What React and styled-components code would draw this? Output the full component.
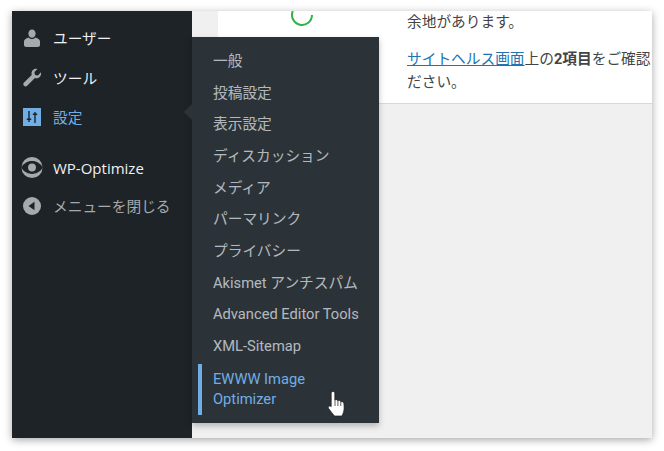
import React from 'react'
import styled, { createGlobalStyle } from 'styled-components'

const Global = createGlobalStyle`
  html, body { margin: 0; padding: 0; background: #fff; }
  body { width: 664px; height: 451px; overflow: hidden; font-family: Roboto, "Noto Sans CJK JP", sans-serif; }
`

const Page = styled.div`
  width: 664px;
  height: 451px;
  box-sizing: border-box;
  padding: 11px 12px 13px;
`

const Frame = styled.div`
  position: relative;
  display: flex;
  height: 427px;
  background: #f0f0f1;
  box-shadow: 0 2px 8px rgba(0, 0, 0, 0.35);
  overflow: hidden;
`

const Sidebar = styled.nav`
  width: 180px;
  flex: none;
  background: #1d2327;
  padding-top: 7px;
  box-sizing: border-box;
`

const MenuRow = styled.div`
  display: flex;
  align-items: center;
  height: 39.5px;
  margin-top: ${p => p.$gap || 0}px;
  padding-left: 9px;
  gap: 10px;
  font-size: ${p => p.$latin ? 15 : 14.7}px;
  font-family: ${p => p.$latin ? '"Open Sans", sans-serif' : 'inherit'};
  font-weight: ${p => p.$latin ? 500 : 400};
  color: ${p => p.$color || '#f0f0f1'};
`

const IconBox = styled.span`
  display: flex;
  width: 22px;
  height: 22px;
  align-items: center;
  justify-content: center;
  flex: none;
`

const Main = styled.div`
  flex: 1;
  padding-left: 26px;
`

const Card = styled.section`
  display: flex;
  height: 92px;
  background: #fff;
  border-bottom: 1px solid #d8d8d8;
`

const RingCell = styled.div`
  width: 189px;
  flex: none;
  padding-left: 72px;
  box-sizing: border-box;
`

const Notice = styled.div`
  font-size: 14.7px;
  line-height: 23px;
  color: #444;
  white-space: nowrap;
  overflow: hidden;
  flex: 1;
`

const Para = styled.p`
  margin: 0 0 14px;
`

const Link = styled.a`
  color: #2271b1;
  text-decoration: underline;
`

const Flyout = styled.ul`
  position: absolute;
  left: 180px;
  top: 26px;
  width: 187px;
  height: 386px;
  box-sizing: border-box;
  margin: 0;
  padding: 8px 0 0;
  list-style: none;
  background: #2c3338;
  box-shadow: 0 3px 6px rgba(0, 0, 0, 0.25);
  &::before {
    content: "";
    position: absolute;
    left: -8px;
    top: 67px;
    border: 8px solid transparent;
    border-left: 0;
    border-right-color: #2c3338;
  }
`

const SubItem = styled.li`
  padding-left: ${p => p.$active ? 11 : 21}px;
  margin-left: ${p => p.$active ? 6 : 0}px;
  margin-top: ${p => p.$active ? 2 : 0}px;
  min-height: ${p => p.$active ? 51 : 31.7}px;
  display: flex;
  align-items: center;
  font-size: 14.7px;
  line-height: 20px;
  color: ${p => p.$active ? '#72aee6' : 'rgba(240, 246, 252, 0.7)'};
  border-left: ${p => p.$active ? '4px solid #72aee6' : '0'};
  white-space: pre-line;
`

const Cursor = styled.svg`
  position: absolute;
  left: 315px;
  top: 379px;
`

const items = ['一般', '投稿設定', '表示設定', 'ディスカッション', 'メディア', 'パーマリンク', 'プライバシー', 'Akismet アンチスパム', 'Advanced Editor Tools', 'XML-Sitemap']

export default function App() {
  return (
    <Page>
      <Global />
      <Frame>
        <Sidebar>
          <MenuRow>
            <IconBox>
              <svg width="20" height="20" viewBox="0 0 20 20" fill="#a7aaad">
                <path d="M10 1.500c2.200 0 3.600 1.700 3.600 4s-1.500 4.300-3.600 4.300S6.400 7.800 6.400 5.500 7.800 1.500 10 1.500z" />
                <path d="M6.800 9.500c.9 1 2 1.600 3.200 1.600s2.300-.6 3.200-1.600c2 .4 4.300 1.500 4.800 3.500v4c0 1-1 2-2.500 2h-11C3 19 2 18 2 17v-4c.5-2 2.800-3.100 4.800-3.500z" />
              </svg>
            </IconBox>
            ユーザー
          </MenuRow>
          <MenuRow>
            <IconBox>
              <svg width="20" height="20" viewBox="0 0 20 20" fill="#a7aaad">
                <path d="M18.900 5.300c.5 1.800 0 3.500-1.200 4.700-1.300 1.200-3.100 1.700-4.800 1.100l-7.700 7.600c-.9.900-2.400.9-3.200 0-.9-.9-.9-2.300 0-3.200l7.700-7.600c-.5-1.700-.1-3.500 1.200-4.800 1.200-1.200 2.900-1.600 4.500-1.200l-3 3 .6 3 3 .6z" />
              </svg>
            </IconBox>
            ツール
          </MenuRow>
          <MenuRow $color="#72aee6">
            <IconBox>
              <svg width="18" height="18" viewBox="0 0 18 18">
                <rect width="18" height="18" fill="#72aee6" />
                <path d="M6 3v11M12 4v11" stroke="#1d2327" strokeWidth="1.400" fill="none" />
                <path d="M3.800 10.500h4.400v1.500H3.800zM9.800 5.500h4.400V7H9.800z" fill="#1d2327" />
              </svg>
            </IconBox>
            設定
          </MenuRow>
          <MenuRow $gap={11.5} $latin>
            <IconBox>
              <svg width="23" height="23" viewBox="0 0 24 24">
                <circle cx="12" cy="12" r="11.500" fill="#a7aaad" />
                <path d="M0 12C4 6.500 8 5 12 5s8 1.500 12 7c-4 5.500-8 7-12 7S4 17.500 0 12z" fill="#1d2327" />
                <circle cx="12" cy="12" r="4.300" fill="#a7aaad" />
              </svg>
            </IconBox>
            WP-Optimize
          </MenuRow>
          <MenuRow $gap={-1.500} $color="#a7aaad">
            <IconBox>
              <svg width="20" height="20" viewBox="0 0 20 20">
                <circle cx="10" cy="10" r="9" fill="#a7aaad" />
                <path d="M12.500 5.800v8.400L6.500 10z" fill="#1d2327" />
              </svg>
            </IconBox>
            メニューを閉じる
          </MenuRow>
        </Sidebar>
        <Main>
          <Card>
            <RingCell>
              <svg width="24" height="16" viewBox="0 0 24 16" fill="none">
                <path d="M22 4A10 10 0 1 1 2.800 0" stroke="#2fb344" strokeWidth="2" />
              </svg>
            </RingCell>
            <Notice>
              <Para>余地があります。</Para>
              <div><Link>サイトヘルス画面</Link>上の<b>2項目</b>をご確認</div>
              <div>ださい。</div>
            </Notice>
          </Card>
        </Main>
        <Flyout>
          {items.map(t => <SubItem key={t}>{t}</SubItem>)}
          <SubItem $active>{'EWWW Image\nOptimizer'}</SubItem>
        </Flyout>
        <Cursor width="22" height="29" viewBox="0 0 22 29">
          <path d="M6 1.500c1.100 0 1.800.8 1.800 1.900V10c1.300-.7 2.600-.4 3 .8 1.300-.6 2.600-.2 3 1 1.300-.5 2.700.1 3 1.500.3 1.800.4 3.500.3 5.200-.1 3-1 5.200-2.200 7.500H7.500C5.500 23.500 3.300 21 1.500 18.300c-.8-1.500.6-3 2.200-2l.5.4V3.400c0-1.100.8-1.900 1.800-1.900z" fill="#fff" stroke="#1a1a1a" strokeWidth="0.700" />
          <path d="M8 10v6M10.900 11v5M13.800 12v4" stroke="#333" strokeWidth="0.800" />
        </Cursor>
      </Frame>
    </Page>
  )
}
